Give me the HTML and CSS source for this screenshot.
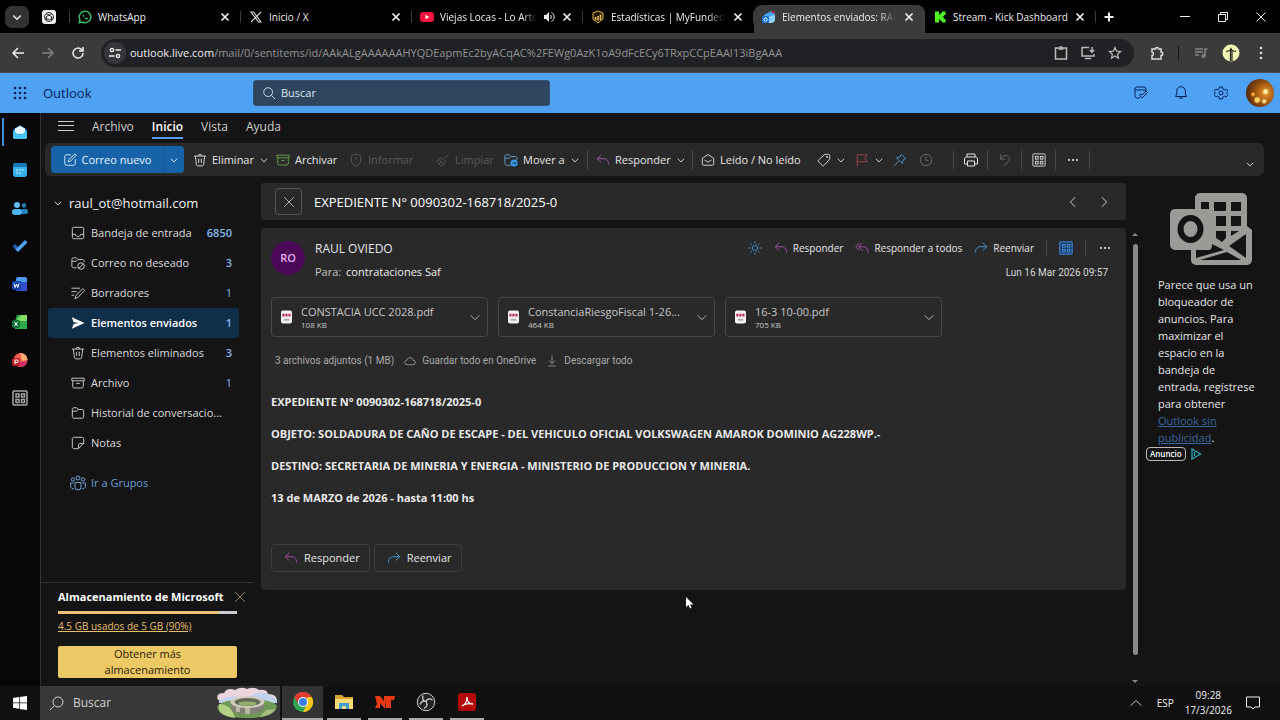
FILE: index.html
```html
<!DOCTYPE html>
<html lang="es">
<head>
<meta charset="utf-8">
<meta name="viewport" content="width=device-width, initial-scale=1">
<title>Elementos enviados: RAUL OVIEDO - Outlook</title>
<link rel="stylesheet" href="styles.css">
</head>
<body>
<svg class="defs" aria-hidden="true">
  <defs>
    <symbol id="x" viewBox="0 0 16 16"><path d="M4 4l8 8M12 4l-8 8"/></symbol>
    <symbol id="bigx" viewBox="0 0 16 16"><path d="M2.500 2.500l11 11M13.500 2.500l-11 11"/></symbol>
    <symbol id="down" viewBox="0 0 16 16"><path d="M3 6l5 5 5-5"/></symbol>
    <symbol id="up" viewBox="0 0 16 16"><path d="M2 11l6-6 6 6"/></symbol>
    <symbol id="left" viewBox="0 0 16 16"><path d="M10.500 2.500L5 8l5.500 5.500"/></symbol>
    <symbol id="right" viewBox="0 0 16 16"><path d="M5.500 2.500L11 8l-5.500 5.500"/></symbol>
    <symbol id="dots" viewBox="0 0 16 16"><g fill="currentColor" stroke="none"><circle cx="3.500" cy="8" r="1.200"/><circle cx="8" cy="8" r="1.200"/><circle cx="12.500" cy="8" r="1.200"/></g></symbol>
    <symbol id="search" viewBox="0 0 16 16"><circle cx="7" cy="7" r="5"/><path d="M10.700 10.700L15 15"/></symbol>
    <symbol id="reply" viewBox="0 0 16 16"><path d="M6 2L1.500 6.500 6 11M1.500 6.500H8c4 0 6.500 2.500 6.500 7"/></symbol>
    <symbol id="replyall" viewBox="0 0 16 16"><path d="M5 2L.8 6.500 5 11M8.500 2L4.300 6.500 8.500 11M4.500 6.500H9c4 0 6 2.500 6 7"/></symbol>
    <symbol id="forward" viewBox="0 0 16 16"><path d="M10 2l4.500 4.500L10 11M14.500 6.500H8c-4 0-6.500 2.500-6.500 7"/></symbol>
    <symbol id="trash" viewBox="0 0 16 16"><path d="M1 3.500h14M6 3.500a2 2 0 0 1 4 0M2.700 3.500l1.200 9.700c.1.900.8 1.500 1.600 1.500h5c.8 0 1.500-.6 1.600-1.500l1.200-9.700M6.500 6.500v5M9.500 6.500v5"/></symbol>
    <symbol id="archive" viewBox="0 0 16 16"><path d="M1 2.500h14v3H1zM2 5.500v6.500c0 1 .7 1.700 1.700 1.700h8.600c1 0 1.700-.7 1.700-1.700V5.500M6 8.500h4"/></symbol>
    <symbol id="apps" viewBox="0 0 16 16"><rect x="1" y="1" width="14" height="14" rx="1"/><rect x="4" y="4" width="3" height="3"/><rect x="9.500" y="4" width="3" height="3"/><rect x="4" y="9.500" width="3" height="3"/><rect x="9.500" y="9.500" width="3" height="3"/></symbol>
    <symbol id="compose" viewBox="0 0 16 16"><path d="M9 2H4C2.900 2 2 2.900 2 4v8c0 1.100.9 2 2 2h8c1.100 0 2-.9 2-2V7M6 10l.7-2.500 7-6.500 1.500 1.500-6.700 7z"/></symbol>
    <symbol id="shield" viewBox="0 0 16 16"><path d="M8 1l5.500 2v5c0 3.500-2.300 5.700-5.500 7-3.200-1.300-5.500-3.500-5.500-7V3zM8 4.500v4M8 10.300v1"/></symbol>
    <symbol id="broom" viewBox="0 0 16 16"><path d="M15 1l-5 5M6 5l5 5-4.500 5C4 13.500 2 11.500 1 9zM3.500 7.500l5 5M4 12l2-2"/></symbol>
    <symbol id="move" viewBox="0 0 16 16"><path d="M8 14H3c-1 0-2-.8-2-2V4c0-1 .8-2 2-2h3l2 2h5c1 0 2 1 2 2v2M1 6h5l2-2"/><circle cx="11.500" cy="11.500" r="4" fill="#3a9be8" stroke="none"/><path d="M9.500 11.500h4M12 10l1.500 1.500L12 13" stroke="#17314a"/></symbol>
    <symbol id="mailopen" viewBox="0 0 16 16"><path d="M1.500 6L8 1.800 14.500 6v6.500c0 1-.7 1.500-1.500 1.500H3c-.8 0-1.500-.5-1.500-1.500zM4 8l4 2.500L12 8"/></symbol>
    <symbol id="tag" viewBox="0 0 16 16"><path d="M9 1.500h4.500l1 1V7L8 14.200c-.6.600-1.400.6-2 0L1.800 10c-.6-.6-.6-1.400 0-2z"/><circle cx="11.500" cy="4.500" r=".7"/></symbol>
    <symbol id="flag" viewBox="0 0 16 16"><path d="M2.500 15V2h11.500l-3 4 3 4H2.500"/></symbol>
    <symbol id="pin" viewBox="0 0 16 16"><path d="M9.500 1.500l5 5-3 1.500-1 4-6.500-6.500 4-1zM6.500 9.500L1.500 14.500"/></symbol>
    <symbol id="clock" viewBox="0 0 16 16"><circle cx="8" cy="8" r="6.500"/><path d="M8 4v4.500h3"/></symbol>
    <symbol id="print" viewBox="0 0 16 16"><path d="M4 5V2h8v3M4 12H1.500V7c0-1.200.8-2 2-2h9c1.200 0 2 .8 2 2v5H12M4.500 9h7v5h-7z"/></symbol>
    <symbol id="undo" viewBox="0 0 16 16"><path d="M3 1.500v5.500h5.500M3 7c2-3.500 4.500-4.500 7-4 3 .8 4 4.500 1.500 7L7 14.500"/></symbol>
    <symbol id="inbox" viewBox="0 0 16 16"><rect x="1.500" y="1.500" width="13" height="13" rx="1.500"/><path d="M1.500 9.500h3.500c.5 2 1.500 2.500 3 2.500s2.500-.5 3-2.500h3.500"/></symbol>
    <symbol id="junk" viewBox="0 0 16 16"><path d="M6.500 13.500H3c-1 0-2-.8-2-2V4c0-1 .8-2 2-2h3l2 2h5c1 0 2 1 2 2v1M1 6h5l2-2"/><circle cx="11.500" cy="11.500" r="3.700"/><path d="M9 14l5-5"/></symbol>
    <symbol id="draft" viewBox="0 0 16 16"><path d="M.5 2.500h10M.5 6.500h6M.5 10.500h3M4.500 14.500l1-3.500L13.500 3l2.200 2.200-8 8z"/></symbol>
    <symbol id="send" viewBox="0 0 16 16"><path d="M1 1.500L15.500 8 1 14.500 3 9l6-1-6-1z" fill="currentColor"/></symbol>
    <symbol id="folder" viewBox="0 0 16 16"><path d="M1.500 12V4c0-1 .6-2 2-2h3l2 2h4c1.300 0 2 .7 2 2v6c0 1.200-.8 2-2 2h-9c-1.200 0-2-.8-2-2zM1.500 6H6l2.300-2"/></symbol>
    <symbol id="note" viewBox="0 0 16 16"><path d="M14.500 8.500V3.500c0-1.200-.8-2-2-2h-9c-1.200 0-2 .8-2 2v9c0 1.200.8 2 2 2H8.500zM8.500 14.500V10.500c0-1.200.8-2 2-2h4"/></symbol>
    <symbol id="people" viewBox="0 0 16 16"><circle cx="8" cy="3" r="2"/><circle cx="3" cy="4.500" r="1.700"/><circle cx="13" cy="4.500" r="1.700"/><path d="M5 7.500h6v4.500a3 3 0 0 1-6 0zM3.500 8H.7v3.500c0 1.500 1.500 2.500 3.500 2.300M12.500 8h2.800v3.500c0 1.500-1.500 2.500-3.500 2.300"/></symbol>
    <symbol id="sun" viewBox="0 0 16 16"><circle cx="8" cy="8" r="3"/><path d="M8 .5v2.500M8 13v2.500M.5 8H3M13 8h2.500M2.700 2.700l1.800 1.800M11.500 11.500l1.800 1.800M13.300 2.700l-1.800 1.800M4.500 11.500l-1.800 1.800"/></symbol>
    <symbol id="cloud" viewBox="0 0 16 16"><path d="M4 13a3 3 0 0 1 0-6c.5-2.500 2-3.500 4-3.500s3.600 1.300 4 3.500a3 3 0 0 1 0 6z"/></symbol>
    <symbol id="download" viewBox="0 0 16 16"><path d="M8 1v10M4 7.500L8 11.500l4-4M3 14.500h10"/></symbol>
    <symbol id="pdf" viewBox="0 0 12 14"><rect width="12" height="14" rx="2" fill="#f6f2f4" stroke="none"/><path d="M1.500 5h9" stroke="#b5274b" stroke-width="3" stroke-dasharray="2.300 1"/><path d="M3 10h6" stroke="#aaa" stroke-width="2"/></symbol>
  </defs>
</svg>

<nav class="tabstrip" aria-label="Pestañas">
  <button class="tabsearch" aria-label="Buscar pestañas"><svg class="i12 bold"><use href="#down"/></svg></button>
  <div class="pinned"><svg class="i14" viewBox="0 0 14 14"><rect width="14" height="14" rx="3" fill="#eee"/><g stroke="#333" stroke-width="1"><circle cx="7" cy="7" r="4.500"/><path d="M4 3.500l5.500 3v4M10 3.500l-5.500 3v4.500M2.500 7.500L7 10l4.500-2.500"/></g></svg></div>
  <div class="tab"><svg class="i14" viewBox="0 0 14 14"><path d="M1.200 12.800l.8-3a5.800 5.800 0 1 1 2.200 2.200z" stroke="#3dba65" stroke-width="1.500"/><path d="M4.800 4.200c-.8 1.800 2 5.200 4.500 5.400l.8-1.300-1.600-.9-.8.800C6.500 7.800 6 7 5.700 6.300l.6-.8z" fill="#3dba65"/></svg><span class="tabname">WhatsApp</span><button aria-label="Cerrar"><svg class="i14 bold"><use href="#x"/></svg></button></div>
  <div class="tab"><svg class="i14" viewBox="0 0 14 14"><path d="M2 2h2.500L12 12H9.500zM12 2L2 12" stroke="#ddd" stroke-width="1.100"/></svg><span class="tabname">Inicio / X</span><button aria-label="Cerrar"><svg class="i14 bold"><use href="#x"/></svg></button></div>
  <div class="tab"><svg class="i14" viewBox="0 0 14 14"><rect y="2" width="14" height="10" rx="3" fill="#f5123d"/><path d="M5.500 4.800v4.400L9.300 7z" fill="#fff"/></svg><span class="tabname fade">Viejas Locas - Lo Arte</span><svg class="i12 sound" viewBox="0 0 12 12"><path d="M1 4h2l3-3v10L3 8H1z" fill="currentColor"/><path d="M7.500 4c1 1 1 3 0 4M8.500 1.500c3.500 2 3.500 7 0 9"/></svg><button aria-label="Cerrar"><svg class="i14 bold"><use href="#x"/></svg></button></div>
  <div class="tab"><svg class="i14" viewBox="0 0 14 14"><path d="M2 3l5-2 5 2v6l-5 4-5-4z" stroke="#e0b34c" fill="#241c0c"/><path d="M4.500 10V7M7 10.500V6M9.500 10V4.500" stroke="#e9bd55" stroke-width="1.600"/></svg><span class="tabname fade">Estadísticas | MyFundedF</span><button aria-label="Cerrar"><svg class="i14 bold"><use href="#x"/></svg></button></div>
  <div class="tab current"><svg class="i14" viewBox="0 0 14 14"><path d="M2 5l7-4 4 3v6l-4 3H3z" fill="#45a8ef"/><path d="M8 2l5-1v3z" fill="#a72355"/><path d="M4 7l9-2v6l-3 2H5z" fill="#8fd0ff"/><rect y="6" width="7" height="7" rx="1" fill="#1674d2"/><circle cx="3.500" cy="9.500" r="1.600" stroke="#fff"/></svg><span class="tabname fade">Elementos enviados: RAL</span><button aria-label="Cerrar"><svg class="i14 bold"><use href="#x"/></svg></button></div>
  <div class="tab"><svg class="i14" viewBox="0 0 14 14"><path d="M2 1.500h4v3h1.500V3H9V1.500h3.500V5H11v1.500H9.500v1H11V9h1.500v3.500H9V11H7.500V9.500H6v3H2z" fill="#4cf520"/></svg><span class="tabname">Stream - Kick Dashboard</span><button aria-label="Cerrar"><svg class="i14 bold"><use href="#x"/></svg></button></div>
  <button class="newtab" aria-label="Nueva pestaña"><svg class="i14 bold" viewBox="0 0 14 14"><path d="M7 2.500v9M2.500 7h9"/></svg></button>
  <div class="winctl">
    <button aria-label="Minimizar"><svg class="i12" viewBox="0 0 12 12"><path d="M1 5.500h10"/></svg></button>
    <button aria-label="Restaurar"><svg class="i12" viewBox="0 0 12 12"><path d="M1.500 3.500h7v7h-7zM3.500 3V1.500h7v7H9"/></svg></button>
    <button aria-label="Cerrar ventana"><svg class="i12" viewBox="0 0 12 12"><path d="M1.500 1.500l9 9M10.500 1.500l-9 9"/></svg></button>
  </div>
</nav>

<div class="toolbar">
  <div class="navbtns">
    <button aria-label="Atrás"><svg class="i14 mid" viewBox="0 0 14 14"><path d="M13 7H2.500M7 2L2 7l5 5"/></svg></button>
    <button aria-label="Adelante" class="dim"><svg class="i14 mid" viewBox="0 0 14 14"><path d="M1 7h10.500M7 2l5 5-5 5"/></svg></button>
    <button aria-label="Recargar"><svg class="i14 mid" viewBox="0 0 14 14"><path d="M12 7a5 5 0 1 1-1.500-3.500L12 5M12 1v4H8"/></svg></button>
  </div>
  <div class="omnibox">
    <span class="site"><svg class="i12" viewBox="0 0 12 12" stroke-width="1.400"><circle cx="3" cy="3" r="1.600"/><path d="M6.500 3H12M0 9h5.500"/><circle cx="9" cy="9" r="1.600"/></svg></span>
    <span class="url"><b>outlook.live.com</b>/mail/0/sentitems/id/AAkALgAAAAAAHYQDEapmEc2byACqAC%2FEWg0AzK1oA9dFcECy6TRxpCCpEAAI13iBgAAA</span>
    <svg class="i14 mid" viewBox="0 0 14 14"><rect x="1.500" y="2" width="11" height="11"/><path d="M4.500 3h5M5.500 1h3"/></svg>
    <svg class="i14 mid" viewBox="0 0 14 14"><path d="M8 1.500H1v8.500h12V8M4 12.500h6M11 1v5M8.800 4L11 6.200 13.200 4"/></svg>
    <svg class="i14" viewBox="0 0 14 14"><path d="M7 1.500l1.600 3.700 4 .3-3 2.700.9 4L7 10l-3.500 2.200.9-4-3-2.700 4-.3z" stroke-width="1.200"/></svg>
  </div>
  <div class="exts">
    <svg class="i14 mid" viewBox="0 0 14 14"><path d="M2 3h3.500a1.500 1.500 0 0 1 3 0H11v3a1.500 1.500 0 0 1 0 3.500V13H2V9.500c2 0 2-3.500 0-3.500z"/></svg>
    <span class="bar"></span>
    <svg class="i14 dim mid" viewBox="0 0 14 14"><path d="M1 3h8M1 6h8M1 9h4M11 10V3h2.500"/><circle cx="9.500" cy="10" r="1.300"/></svg>
    <svg class="i18" viewBox="0 0 18 18"><circle cx="9" cy="9" r="8.500" fill="#f1f5b5"/><path d="M4 7.500l4-1 1-2 1 2 4 1M8.500 6v11M10 6v11" stroke="#252520" stroke-width="1.200"/></svg>
    <svg class="i14" viewBox="0 0 14 14"><g fill="#ddd"><circle cx="7" cy="2" r="1.300"/><circle cx="7" cy="7" r="1.300"/><circle cx="7" cy="12" r="1.300"/></g></svg>
  </div>
</div>

<header class="apphead">
  <button class="waffle" aria-label="Aplicaciones"><svg class="i14" viewBox="0 0 14 14"><g fill="#06225a"><circle cx="2" cy="2" r="1.300"/><circle cx="7" cy="2" r="1.300"/><circle cx="12" cy="2" r="1.300"/><circle cx="2" cy="7" r="1.300"/><circle cx="7" cy="7" r="1.300"/><circle cx="12" cy="7" r="1.300"/><circle cx="2" cy="12" r="1.300"/><circle cx="7" cy="12" r="1.300"/><circle cx="12" cy="12" r="1.300"/></g></svg></button>
  <span class="brand">Outlook</span>
  <label class="searchbox"><svg class="i14"><use href="#search"/></svg><input type="search" placeholder="Buscar" aria-label="Buscar"></label>
  <div class="headicons">
    <svg class="i14" viewBox="0 0 14 14"><path d="M6 12H3a2 2 0 0 1-2-2V3a2 2 0 0 1 2-2h7a2 2 0 0 1 2 2v2M1 4h11M5.500 9.500L8 12l5.500-5.500L12 5 8 9 6.500 8z"/></svg>
    <svg class="i14" viewBox="0 0 14 14"><path d="M1.500 10.500h11L11.300 8V5a4.300 4.300 0 0 0-8.600 0v3zM5.500 11a1.500 1.500 0 0 0 3 0"/></svg>
    <svg class="i14" viewBox="0 0 14 14"><circle cx="7" cy="7" r="2"/><path d="M5.500 1h3l.5 2 1.500.8 2-.6L14 5.500 12.500 7 14 8.500l-1.500 2.300-2-.6L9 11l-.5 2h-3L5 11l-1.500-.8-2 .6L0 8.500 1.500 7 0 5.500l1.500-2.300 2 .6L5 3z"/></svg>
    <span class="me"></span>
  </div>
</header>

<div class="app">
  <nav class="rail" aria-label="Aplicaciones">
    <a href="#" class="on" aria-label="Correo"><svg class="i16" viewBox="0 0 16 16"><path d="M1 6l7-5 7 5v7a2 2 0 0 1-2 2H3a2 2 0 0 1-2-2z" fill="#1d8ce0"/><path d="M3 4.500L8 2l5 2.500V10H3z" fill="#e4f7ff"/><path d="M1 7l7 4 7-4v6a2 2 0 0 1-2 2H3a2 2 0 0 1-2-2z" fill="#46c4f5"/></svg></a>
    <a href="#" aria-label="Calendario"><svg class="i16" viewBox="0 0 16 16"><rect x="1" y="1" width="14" height="14" rx="3" fill="#37b1ee"/><path d="M1 5V4a3 3 0 0 1 3-3h8a3 3 0 0 1 3 3v1z" fill="#1577b8"/><path d="M4 8h8M4 11h5" stroke="#c9efff" stroke-dasharray="2 1"/></svg></a>
    <a href="#" aria-label="Contactos"><svg class="i16" viewBox="0 0 16 16"><circle cx="5" cy="5" r="3" fill="#63bdf0"/><circle cx="12" cy="5.500" r="2.200" fill="#267fbd"/><rect x="8" y="9" width="8" height="5" rx="2.500" fill="#2384c5"/><rect y="9" width="10" height="6" rx="3" fill="#4cb6f3"/></svg></a>
    <a href="#" aria-label="Tareas"><svg class="i16" viewBox="0 0 16 16"><path d="M.5 8.500L3 6l5 5-2.500 2.500z" fill="#215fae"/><path d="M3.500 11.500L13 2l2.500 2.500L6 14z" fill="#4ba1f0"/></svg></a>
    <a href="#" aria-label="Word"><svg class="i16" viewBox="0 0 16 16"><rect x="4" y="1" width="11" height="14" rx="2" fill="#4b9cf2"/><path d="M4 6h11v7a2 2 0 0 1-2 2H4z" fill="#3450ce"/><rect y="5" width="9" height="9" rx="2" fill="#1742a8"/><path d="M2 7.500l1.200 4 1.300-3.500 1.300 3.500L7 7.500" stroke="#fff"/></svg></a>
    <a href="#" aria-label="Excel"><svg class="i16" viewBox="0 0 16 16"><path d="M5 1h10v14H3V7z" fill="#2eaa49"/><path d="M9 1h6v6H4z" fill="#83dd65"/><rect y="6" width="8" height="8" rx="2" fill="#12723c"/><path d="M2.500 8l3 4M5.500 8l-3 4" stroke="#fff"/></svg></a>
    <a href="#" aria-label="PowerPoint"><svg class="i16" viewBox="0 0 16 16"><circle cx="8.500" cy="8" r="7" fill="#ed5b47"/><path d="M8 1a7 7 0 0 1 7.500 7L10 9z" fill="#ffab70"/><path d="M2 11l13-2a7 7 0 0 1-13 2z" fill="#d32c68"/><rect y="6" width="8" height="8" rx="2" fill="#bb2328"/><path d="M3 12V8h2a1 1 0 0 1 0 2.500H3" stroke="#fff"/></svg></a>
    <a href="#" aria-label="Más aplicaciones" class="grey"><svg class="i16 mid"><use href="#apps"/></svg></a>
  </nav>

  <div class="work">
    <nav class="menu">
      <button class="burger" aria-label="Panel"><svg class="i16" viewBox="0 0 16 16"><path d="M0 3.500h16M0 7.500h16M0 12.500h16"/></svg></button>
      <a href="#">Archivo</a><a href="#" class="sel">Inicio</a><a href="#">Vista</a><a href="#">Ayuda</a>
    </nav>
    <div class="ribbon">
      <div class="newmail"><button><svg class="i14"><use href="#compose"/></svg>Correo nuevo</button><button aria-label="Más opciones"><svg class="i10"><use href="#down"/></svg></button></div>
      <button class="cmd w83"><svg class="i14"><use href="#trash"/></svg>Eliminar<svg class="i10"><use href="#down"/></svg></button>
      <button class="cmd w73"><svg class="i14 green"><use href="#archive"/></svg>Archivar</button>
      <button class="cmd off w87" disabled><svg class="i14"><use href="#shield"/></svg>Informar</button>
      <button class="cmd off w68" disabled><svg class="i14"><use href="#broom"/></svg>Limpiar</button>
      <button class="cmd w83"><svg class="i14 blueline"><use href="#move"/></svg>Mover a<svg class="i10"><use href="#down"/></svg></button>
      <span class="div"></span>
      <button class="cmd w104"><svg class="i14 purple"><use href="#reply"/></svg>Responder<svg class="i10"><use href="#down"/></svg></button>
      <span class="div"></span>
      <button class="cmd w124"><svg class="i14"><use href="#mailopen"/></svg>Leído / No leído</button>
      <button class="cmd w38" aria-label="Categorizar"><svg class="i14"><use href="#tag"/></svg><svg class="i10"><use href="#down"/></svg></button>
      <button class="cmd w38" aria-label="Marcar"><svg class="i14 red"><use href="#flag"/></svg><svg class="i10"><use href="#down"/></svg></button>
      <button class="cmd w26" aria-label="Anclar"><svg class="i14 blue"><use href="#pin"/></svg></button>
      <button class="cmd off w34" aria-label="Posponer" disabled><svg class="i14 clock"><use href="#clock"/></svg></button>
      <span class="div"></span>
      <button class="cmd w33" aria-label="Imprimir"><svg class="i16"><use href="#print"/></svg></button><span class="div"></span>
      <button class="cmd off w33" aria-label="Deshacer" disabled><svg class="i14 clock"><use href="#undo"/></svg></button><span class="div"></span>
      <button class="cmd w33" aria-label="Aplicaciones"><svg class="i14"><use href="#apps"/></svg></button><span class="div"></span>
      <button class="cmd w33" aria-label="Más"><svg class="i14"><use href="#dots"/></svg></button><span class="div"></span>
      <button class="collapse" aria-label="Opciones de cinta"><svg class="i10"><use href="#down"/></svg></button>
    </div>

    <div class="panes">
      <aside class="folders">
        <button class="account"><svg class="i10"><use href="#down"/></svg>raul_ot@hotmail.com</button>
        <ul>
          <li><a href="#"><svg class="i14"><use href="#inbox"/></svg><span>Bandeja de entrada</span><b>6850</b></a></li>
          <li><a href="#"><svg class="i14"><use href="#junk"/></svg><span>Correo no deseado</span><b>3</b></a></li>
          <li><a href="#"><svg class="i14"><use href="#draft"/></svg><span>Borradores</span><i>1</i></a></li>
          <li><a href="#" class="sel"><svg class="i14"><use href="#send"/></svg><span>Elementos enviados</span><i>1</i></a></li>
          <li><a href="#"><svg class="i14"><use href="#trash"/></svg><span>Elementos eliminados</span><b>3</b></a></li>
          <li><a href="#"><svg class="i14"><use href="#archive"/></svg><span>Archivo</span><i>1</i></a></li>
          <li><a href="#"><svg class="i14"><use href="#folder"/></svg><span>Historial de conversacio...</span></a></li>
          <li><a href="#"><svg class="i14"><use href="#note"/></svg><span>Notas</span></a></li>
          <li class="groups"><a href="#"><svg class="i16"><use href="#people"/></svg><span>Ir a Grupos</span></a></li>
        </ul>
        <section class="storage">
          <div class="storhead"><h2>Almacenamiento de Microsoft</h2><button aria-label="Cerrar"><svg class="i14"><use href="#bigx"/></svg></button></div>
          <div class="meter"><div class="fill" style="width:90%"></div></div>
          <a href="#">4.5 GB usados de 5 GB (90%)</a>
          <button class="more">Obtener más almacenamiento</button>
        </section>
      </aside>

      <main class="reading">
        <div class="subject">
          <button class="closebox" aria-label="Cerrar mensaje"><svg class="i14"><use href="#bigx"/></svg></button>
          <h1>EXPEDIENTE N° 0090302-168718/2025-0</h1>
          <button aria-label="Anterior"><svg class="i14"><use href="#left"/></svg></button>
          <button aria-label="Siguiente"><svg class="i14"><use href="#right"/></svg></button>
        </div>
        <article class="message">
          <div class="msghead">
            <span class="avatar">RO</span>
            <div class="who"><div class="from">RAUL OVIEDO</div><div class="to">Para: <span>contrataciones Saf</span></div></div>
            <div class="side">
              <div class="acts">
                <button aria-label="Tema claro"><svg class="i14 blue"><use href="#sun"/></svg></button>
                <button><svg class="i14 purple"><use href="#reply"/></svg>Responder</button>
                <button><svg class="i14 purple"><use href="#replyall"/></svg>Responder a todos</button>
                <button><svg class="i14 blue"><use href="#forward"/></svg>Reenviar</button>
                <span class="sep"></span>
                <button aria-label="Aplicaciones"><svg class="i14 bluebox"><use href="#apps"/></svg></button>
                <span class="sep"></span>
                <button aria-label="Más acciones"><svg class="i14"><use href="#dots"/></svg></button>
              </div>
              <time>Lun 16 Mar 2026 09:57</time>
            </div>
          </div>
          <div class="files">
            <div class="file"><svg class="doc"><use href="#pdf"/></svg><div class="meta"><div class="fname">CONSTACIA UCC 2028.pdf</div><small>108 KB</small></div><button aria-label="Opciones"><svg class="i14"><use href="#down"/></svg></button></div>
            <div class="file"><svg class="doc"><use href="#pdf"/></svg><div class="meta"><div class="fname">ConstanciaRiesgoFiscal 1-26...</div><small>464 KB</small></div><button aria-label="Opciones"><svg class="i14"><use href="#down"/></svg></button></div>
            <div class="file"><svg class="doc"><use href="#pdf"/></svg><div class="meta"><div class="fname">16-3 10-00.pdf</div><small>705 KB</small></div><button aria-label="Opciones"><svg class="i14"><use href="#down"/></svg></button></div>
          </div>
          <div class="filelinks"><span>3 archivos adjuntos (1 MB)</span><button><svg class="i12"><use href="#cloud"/></svg>Guardar todo en OneDrive</button><button><svg class="i12"><use href="#download"/></svg>Descargar todo</button></div>
          <div class="text">
            <p>EXPEDIENTE N° 0090302-168718/2025-0</p>
            <p>OBJETO: SOLDADURA DE CAÑO DE ESCAPE - DEL VEHICULO OFICIAL VOLKSWAGEN AMAROK DOMINIO AG228WP.-</p>
            <p>DESTINO: SECRETARIA DE MINERIA Y ENERGIA - MINISTERIO DE PRODUCCION Y MINERIA.</p>
            <p>13 de MARZO de 2026 - hasta 11:00 hs</p>
          </div>
          <div class="answer"><button><svg class="i14 purple"><use href="#reply"/></svg>Responder</button><button><svg class="i14 blue"><use href="#forward"/></svg>Reenviar</button></div>
        </article>
      </main>

      <div class="scroll" aria-hidden="true"><span class="tri-up"></span><span class="thumb"></span><span class="tri-down"></span></div>

      <aside class="ad">
        <svg class="adlogo" viewBox="0 0 82 72"><path d="M30 0h42a5 5 0 0 1 5 5v28l5 4v30a5 5 0 0 1-5 5H26a5 5 0 0 1-5-5V57H5a5 5 0 0 1-5-5V21a5 5 0 0 1 5-5h20V5a5 5 0 0 1 5-5z" fill="#9a9a96"/><g fill="#141414"><path d="M31 9h8v7h-8zM44 9h12v9H44zM61 9h10v9H61zM46 23h10v10H46zM61 23h10v10H61zM46 38h10v7l-4 4-6-4zM61 38h8l-8 5z"/><path d="M42 51l12 6-28 8V57h13c2 0 3-2 3-6zM59 53l17-12v24zM30 67l27-8 14 8z"/></g><ellipse cx="20.500" cy="36" rx="10" ry="11" stroke="#141414" stroke-width="6"/></svg>
        <p>Parece que usa un bloqueador de anuncios. Para maximizar el espacio en la bandeja de entrada, regístrese para obtener <a href="#">Outlook sin publicidad</a>.</p>
        <div class="adtag"><span>Anuncio</span><svg class="i12" viewBox="0 0 12 12"><path d="M2 1l8.500 5L2 11zM4.500 4v4" stroke="#29a8b8" stroke-width="1.300"/></svg></div>
      </aside>
    </div>
  </div>
</div>

<footer class="taskbar">
  <button class="start" aria-label="Inicio"><svg class="i14" viewBox="0 0 14 14"><path d="M0 2l6-.9v5.400H0zM6.700 1L14 0v6.500H6.700zM0 7.200h6v5.500L0 11.800zM6.700 7.200H14V14l-7.300-1z" fill="#fff"/></svg></button>
  <label class="tasksearch"><svg class="i16 flip"><use href="#search"/></svg><input type="search" placeholder="Buscar" aria-label="Buscar en Windows">
    <svg class="stadium" viewBox="0 0 62 32"><path d="M2 13q-3-7 6-7 3-6 11-3 6-4 12-1 7-3 12 1 8-1 9 4 9 0 9 7z" fill="#ead5df"/><path d="M3 13q9-5 18-3t18-3 22 6v3H3z" fill="#bfd3ec"/><path d="M1 20q3-7 30-8 27 1 30 7-2 12-30 12T1 20z" fill="#6f9a55"/><path d="M3 17q12 0 16 14-14-2-16-8z" fill="#b4cf86"/><path d="M44 30q12-2 16-8l-10 1z" fill="#a5bd7d"/><path d="M15 15v6c0 4 7 6 16 6s17-2 17-6v-6z" fill="#827f74"/><path d="M20 19v6h4v-5zM29 21v6h5v-6z" fill="#bcb6a5"/><ellipse cx="31.500" cy="15" rx="17" ry="6" fill="#d3cdbe"/><ellipse cx="31.500" cy="15" rx="13" ry="4" fill="#65695b"/><ellipse cx="31.500" cy="16.500" rx="9" ry="2" fill="#97b36b"/></svg>
  </label>
  <div class="apps">
    <button class="act" aria-label="Chrome"><svg class="i22" viewBox="0 0 22 22"><circle cx="11" cy="11" r="10" fill="#2fa651"/><path d="M2.300 6A10 10 0 0 1 19.700 6L11 11z" fill="#e33b30"/><path d="M2.300 6L7 14l4-3V6z" fill="#e33b30"/><path d="M19.700 6A10 10 0 0 1 11 21l4-8V6z" fill="#fbc716"/><circle cx="11" cy="11" r="5" fill="#fff"/><circle cx="11" cy="11" r="4" fill="#3a7fe8"/></svg></button>
    <button aria-label="Explorador"><svg class="i20" viewBox="0 0 20 20"><path d="M1 3h7l2 2h9v12H1z" fill="#d9a536"/><path d="M1 7h18v10H1z" fill="#ffdc75"/><path d="M5 17v-6h10v6h-3v-3H8v3z" fill="#3f9bd8"/></svg></button>
    <button aria-label="NinjaTrader"><svg class="i20" viewBox="0 0 20 20"><path d="M0 4h5l4 5V4h11l-1 4h-3v8h-5V9l-1 8L5 11v5H0l2-4z" fill="#e83a14"/></svg></button>
    <button aria-label="OBS"><svg class="i20" viewBox="0 0 20 20"><circle cx="10" cy="10" r="8.700" fill="#242424" stroke="#ccc"/><path d="M7 3.500c-1 3.500 0 5.500 3 6 1-3 4-3.500 6.500-1.500M10 9.500c2 3 1 5.500-2 7M10 9.500c-3-1-5 0-6 3" stroke="#ccc" stroke-width="1.300"/></svg></button>
    <button aria-label="Acrobat"><svg class="i20" viewBox="0 0 20 20"><rect x="1" y="1" width="18" height="18" rx="3" fill="#b30b0b"/><path d="M5 14c3-1 5-5 5-9 0 4 2 7 6 7-4-1-9 0-11 2z" stroke="#fff" stroke-width="1.300"/></svg></button>
  </div>
  <div class="tray">
    <svg class="i14"><use href="#up"/></svg><span>ESP</span>
    <div class="when"><span>09:28</span><span>17/3/2026</span></div>
    <svg class="i14 bell" viewBox="0 0 14 14"><path d="M.5 1h13v10H9l-2 2-2-2H.5z"/></svg>
  </div>
</footer>
<svg class="pointer" viewBox="0 0 10 14" aria-hidden="true"><path d="M1 1v10l2.500-2L5 12.500l1.500-.7L5 8.500h3.500z" fill="#fff"/></svg>
</body>
</html>
```
FILE: styles.css
```css
* { box-sizing: border-box; }
body {
  margin: 0; min-height: 100vh; display: flex; flex-direction: column; position: relative;
  background: #141414; color: #e6e6e6;
  font: 11px/16px "Open Sans", "Noto Sans", sans-serif;
}
button, input { font: inherit; color: inherit; background: none; border: 0; padding: 0; margin: 0; }
button { display: flex; align-items: center; justify-content: center; }
a { color: inherit; text-decoration: none; }
ul, p, h1, h2 { margin: 0; padding: 0; font-size: inherit; list-style: none; }
svg { fill: none; stroke: currentColor; flex: none; display: block; }
svg [fill]:not([stroke]) { stroke: none; }
.defs { position: absolute; width: 0; height: 0; }
.i10 { width: 10px; height: 10px; stroke-width: 1.500; }
.i12 { width: 12px; height: 12px; }
.i14 { width: 14px; height: 14px; }
.i16 { width: 16px; height: 16px; }
.i18 { width: 18px; height: 18px; }
.i20 { width: 20px; height: 20px; }
.i22 { width: 22px; height: 22px; }
.bold { stroke-width: 2; }
.mid { stroke-width: 1.500; }
.dim { color: #858585; }
.green { color: #75ad4b; }
.red { color: #b34755; }
.blue { color: #4ca0e0; }
.blueline { color: #6aa5d0; }
.purple { color: #ad57b5; }
.bluebox { color: #4f9bea; background: #173a63; }

/* browser tabs */
.tabstrip { display: flex; align-items: center; height: 33px; background: #000; color: #eee; padding-left: 5px; }
.tabsearch { width: 24px; height: 22px; border-radius: 7px; background: #333; }
.pinned { width: 41px; height: 12px; display: flex; align-items: center; justify-content: center; border-right: 1px solid #3c3c3c; }
.tab { flex: 0 1 171px; min-width: 0; height: 12px; display: flex; align-items: center; gap: 6px; padding: 0 8px; border-right: 1px solid #3c3c3c; }
.tabname { flex: 1; min-width: 0; white-space: nowrap; font-size: 10px; font-weight: 500; }
.fade { mask-image: linear-gradient(to right, #000 85%, transparent); }
.sound { margin-right: -1px; }
.tab.current { height: 28px; margin-top: 5px; padding-bottom: 5px; background: #3b3b3b; border-radius: 8px 8px 0 0; border-color: transparent; }
.newtab { width: 26px; }
.winctl { margin-left: auto; display: flex; }
.winctl button { width: 38px; }

/* address bar */
.toolbar { display: flex; align-items: center; height: 40px; background: #3b3b3b; border-bottom: 1px solid #4b4b4b; padding-left: 3px; }
.navbtns { display: flex; width: 98px; color: #eee; }
.navbtns button { width: 30px; }
.navbtns .dim { color: #808080; }
.omnibox { flex: 1; min-width: 0; height: 28px; border-radius: 14px; background: #202124; display: flex; align-items: center; gap: 13px; padding: 0 12px 0 3px; color: #bbb; }
.site { width: 22px; height: 22px; border-radius: 50%; background: #36373a; color: #eee; display: flex; align-items: center; justify-content: center; margin-right: -9px; }
.url { flex: 1; min-width: 0; overflow: hidden; white-space: nowrap; color: #929496; }
.url b { color: #eee; font-weight: 400; }
.exts { display: flex; align-items: center; justify-content: space-between; padding: 0 12px 0 16px; width: 146px; color: #ddd; }
.bar { width: 1px; height: 14px; background: #141414; }
.exts .dim { color: #858585; }

/* Outlook header */
.apphead { display: flex; align-items: center; height: 40px; background: #4fa2f3; color: #06225a; }
.waffle { width: 40px; }
.brand { width: 213px; padding-left: 3px; font-size: 13px; }
.searchbox { flex: 0 1 297px; height: 26px; border-radius: 3px; background: #2f455f; border: 1px solid #33506f; color: #dce8f5; display: flex; align-items: center; gap: 5px; padding-left: 8px; }
input { min-width: 0; flex: 1; outline: 0; font-size: 11px; }
input::placeholder { color: inherit; opacity: 1; }
.headicons { margin-left: auto; display: flex; align-items: center; gap: 26px; }
.me { width: 28px; height: 28px; border-radius: 50%; margin: 0 6px 0 -8px; background: radial-gradient(circle at 70% 45%, #fff0a5 0 6%, transparent 14%), radial-gradient(circle at 40% 75%, #ffd060 0 7%, transparent 14%), radial-gradient(circle at 25% 55%, #f5a535 0 4%, transparent 10%), radial-gradient(circle at 65% 80%, #ffe08a 0 4%, transparent 10%), radial-gradient(circle at 70% 50%, #ec9a2a, #9a5010 45%, #2b1308); }

/* shell */
.app { flex: 1; display: flex; min-height: 0; }
.rail { width: 41px; background: #070707; border-right: 1px solid #333; display: flex; flex-direction: column; }
.rail a { height: 38px; display: flex; align-items: center; justify-content: center; }
.rail .on { border-left: 2px solid #3c8de0; margin: 5px 0 5px 2px; height: 28px; padding-right: 4px; }
.grey { color: #a5a5a5; }
.work { flex: 1; min-width: 0; display: flex; flex-direction: column; }
.menu { display: flex; align-items: center; height: 30px; padding-left: 17px; gap: 18px; font-size: 12px; color: #cfcfcf; }
.burger { margin-bottom: 4px; }
.menu a { height: 22px; line-height: 20px; }
.menu .sel { color: #fff; font-weight: 600; border-bottom: 2px solid #5a9bea; }
.ribbon { display: flex; align-items: center; height: 33px; margin: 0 16px 0 4px; padding-left: 6px; background: #292929; border-radius: 6px; white-space: nowrap; }
.newmail { display: flex; width: 133px; height: 27px; background: #1763a9; border-radius: 4px; margin-right: 9px; color: #e9f4ff; }
.newmail button { gap: 5px; }
.newmail button:first-child { width: 112px; }
.newmail button:last-child { width: 21px; border-left: 1px solid #14568f; }
.cmd { gap: 5px; justify-content: flex-start; flex: none; }
.off { color: #5c5c5c; }
.clock { color: #707070; }
.w26 { width: 26px; } .w33 { width: 33px; } .w34 { width: 34px; } .w38 { width: 38px; }
.w68 { width: 68px; } .w73 { width: 73px; } .w83 { width: 83px; } .w87 { width: 87px; } .w104 { width: 104px; } .w124 { width: 124px; }
.w33 { justify-content: center; }
.div { width: 1px; height: 20px; background: #484848; }
.div + .w104, .div + .w124 { padding-left: 8px; }
.collapse { margin: 8px 9px 0 auto; }

/* folder list */
.panes { flex: 1; display: flex; min-height: 0; }
.folders { width: 212px; display: flex; flex-direction: column; padding-top: 11px; }
.account { height: 31px; justify-content: flex-start; gap: 6px; padding-left: 12px; font-size: 13px; color: #f2f2f2; font-weight: 500; }
.folders li a { display: flex; align-items: center; gap: 6px; height: 30px; margin: 0 14px 0 7px; padding: 0 7px 0 23px; border-radius: 3px; color: #dcdcdc; }
.folders li span { flex: 1; min-width: 0; white-space: nowrap; }
.folders li b { color: #86b8ee; font-weight: 600; }
.folders li i { color: #86b8ee; font-style: normal; }
.folders li .sel { background: #0f2e4a; color: #fff; font-weight: 600; }
.folders .groups { margin-top: 10px; }
.folders .groups a { color: #6c9fd6; gap: 5px; padding-left: 22px; }
.storage { margin-top: auto; border-top: 1px solid #333; padding: 5px 16px 8px 17px; }
.storhead { display: flex; align-items: center; height: 18px; white-space: nowrap; }
.storhead h2 { font-weight: 700; color: #fff; flex: 1; min-width: 0; }
.storhead button { color: #a99a55; margin-right: -10px; }
.meter { height: 3px; background: #c9c9d0; margin: 5px 0 4px; }
.fill { height: 100%; background: #e7c277; }
.storage a { display: block; color: #e8bf6b; font-size: 10px; font-weight: 500; text-decoration: underline; height: 16px; }
.more { width: 100%; background: #edc965; color: #2a2005; border-radius: 2px; margin-top: 12px; padding: 0 30px; font-size: 11px; }

/* reading pane */
.reading { flex: 1; min-width: 0; padding: 7px 0 0 8px; }
.subject { display: flex; align-items: center; height: 37px; padding: 0 14px; background: #292929; border-radius: 3px; }
.subject h1 { flex: 1; font-size: 13px; font-weight: 500; color: #fff; }
.subject button { width: 16px; margin-left: 15px; }
.subject .closebox { width: 27px; height: 27px; border: 1px solid #555; border-radius: 4px; margin: 0 12px 0 0; color: #bbb; }
.message { margin-top: 8px; padding: 10px 10px 18px; background: #292929; border-radius: 4px; }
.msghead { display: flex; height: 59px; }
.avatar { width: 34px; height: 34px; border-radius: 50%; background: #4a0857; color: #e6aef0; font-weight: 600; display: flex; align-items: center; justify-content: center; margin-top: 3px; }
.who { flex: 1; padding-left: 10px; padding-top: 3px; }
.from { font-size: 12px; height: 23px; }
.to { color: #c5c5c5; }
.to span { color: #f0f0f0; padding-left: 2px; }
.side { text-align: right; }
.acts { display: flex; align-items: center; justify-content: flex-end; height: 20px; gap: 12px; padding-right: 4px; }
.acts button { gap: 5px; font-size: 10px; font-weight: 500; }
.acts .sep { width: 1px; height: 16px; background: #484848; }
time { display: block; font-family: Roboto, sans-serif; font-size: 10px; margin-top: 7px; color: #d8d8d8; padding-right: 8px; }
.files { display: flex; gap: 10px; }
.file { flex: 0 1 217px; min-width: 0; height: 40px; border: 1px solid #484848; border-radius: 4px; display: flex; align-items: center; gap: 9px; padding: 0 5px 0 9px; color: #c8c8c8; }
.doc { width: 11px; height: 14px; }
.meta { flex: 1; min-width: 0; }
.fname { font-size: 11px; white-space: nowrap; height: 15px; line-height: 15px; }
.meta small { display: block; font-size: 8px; line-height: 12px; }
.filelinks { display: flex; gap: 10px; align-items: center; height: 16px; margin: 16px 0 0 4px; font-family: Roboto, sans-serif; font-size: 10px; color: #aaa; }
.filelinks button { gap: 6px; }
.text { margin-top: 25px; font-weight: 700; color: #eaeaea; }
.text p { line-height: 16px; margin-bottom: 16px; }
.answer { display: flex; gap: 4px; margin-top: 38px; }
.answer button { height: 28px; border: 1px solid #3f3f3f; border-radius: 4px; gap: 6px; padding: 0 9px 0 12px; }

.scroll { width: 18px; display: flex; flex-direction: column; align-items: center; padding: 57px 0 3px; }
.tri-up, .tri-down { border: 3px solid transparent; border-bottom-color: #888; border-top: 0; }
.tri-down { border-bottom: 0; border-top: 3px solid #888; }
.thumb { width: 5px; height: 411px; border-radius: 3px; background: #8a8a8a; margin: 8px 0 auto; }

/* advert */
.ad { width: 136px; padding: 17px 21px 0 14px; }
.adlogo { width: 82px; height: 72px; margin: 0 0 11px 12px; }
.ad p { line-height: 17px; width: 101px; }
.ad a { color: #39679e; text-decoration: underline; }
.adtag { display: flex; align-items: center; gap: 4px; margin: 1px 0 0 -12px; }
.adtag span { font-size: 8px; font-weight: 600; line-height: 12px; color: #fff; border: 1px solid #bbb; border-radius: 4px; padding: 0 3px; }

/* taskbar */
.taskbar { display: flex; height: 34px; background: #101010; }
.start { width: 40px; }
.tasksearch { width: 240px; background: #383838; display: flex; align-items: center; gap: 8px; padding-left: 9px; color: #d0d0d0; }
.flip { transform: scaleX(-1); }
.stadium { width: 62px; height: 32px; margin-right: 2px; }
.tasksearch input { width: 60px; font-size: 12px; }
.apps { display: flex; padding-left: 2px; }
.apps button { width: 34px; margin: 0 3px 0 4px; border-bottom: 2px solid #aaa; }
.apps .act { width: 41px; margin: 0; background: #333; }
.tray { margin-left: auto; display: flex; align-items: center; padding-right: 20px; font-size: 10px; color: #eee; }
.tray > span { margin-left: 14px; width: 28px; }
.when { display: flex; flex-direction: column; align-items: center; line-height: 15px; }
.bell { margin-left: 14px; }
.pointer { position: absolute; left: 685px; top: 596px; width: 10px; height: 14px; }
```
